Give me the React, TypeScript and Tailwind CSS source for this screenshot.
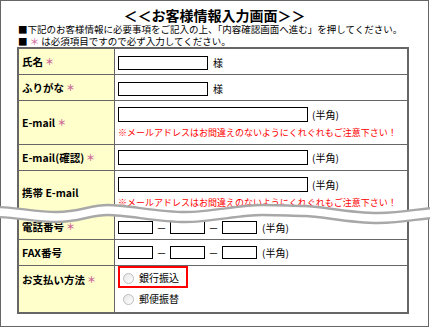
import type { ReactNode } from "react";

const jp = "font-['Noto_Sans_CJK_JP','Liberation_Sans',sans-serif]";

const WAVE =
  "M-5,212 C15,212 35,217 57,217 S90,210 108,210 S160,217 185,217 S240,210 262,210 S290,211 305,211 S350,218 378,218 S420,213 435,213";

function Star() {
  return <span className="ml-[2px] text-[9px] text-[#cc6699]">＊</span>;
}

function Row({
  label,
  required,
  height,
  last,
  alignTop,
  children,
}: {
  label: string;
  required?: boolean;
  height: string;
  last?: boolean;
  alignTop?: boolean;
  children: ReactNode;
}) {
  return (
    <div className={`grid grid-cols-[96px_1fr] ${height} ${last ? "" : "border-b border-[#666]"}`}>
      <div
        className={`flex border-r border-[#666] bg-[#ffffcc] pl-[3px] text-[10.5px] font-bold leading-[12px] text-black ${
          alignTop ? "items-start pt-[8px]" : "items-center"
        }`}
      >
        {label}
        {required && <Star />}
      </div>
      <div className="pl-[3px]">{children}</div>
    </div>
  );
}

function TextBox({ width, height = "h-[14px]" }: { width: string; height?: string }) {
  return <input type="text" className={`${width} ${height} border border-black bg-white`} />;
}

function Note() {
  return (
    <p className="mt-[5px] text-[9px] leading-[12px] text-[#ff0000]">
      ※メールアドレスはお間違えのないようにくれぐれもご注意下さい！
    </p>
  );
}

function Radio({ label }: { label: string }) {
  return (
    <label className="flex items-center gap-[5px]">
      <span className="h-[11px] w-[11px] rounded-full border border-[#bdbdbd] bg-gradient-to-br from-[#e6e6e6] to-white" />
      <span className="text-[10px] leading-[12px]">{label}</span>
    </label>
  );
}

function TelInputs() {
  return (
    <div className="flex h-full items-center text-[10px]">
      <TextBox width="w-[35px]" height="h-[13px]" />
      <span className="w-[17px] text-center">－</span>
      <TextBox width="w-[35px]" height="h-[13px]" />
      <span className="w-[17px] text-center">－</span>
      <TextBox width="w-[35px]" height="h-[13px]" />
      <span className="ml-[5px]">(半角)</span>
    </div>
  );
}

export default function App() {
  return (
    <div className={`relative h-[327px] w-[430px] overflow-hidden bg-white text-black ${jp}`}>
      <div className="h-[327px] w-[429px] border border-[#666] pl-[16px] pt-[6px]">
        <h1 className="pr-[16px] text-center text-[14px] font-bold leading-[16px]">
          ＜＜お客様情報入力画面＞＞
        </h1>
        <p className="pl-px text-[9.5px] leading-[12px]">
          ■下記のお客様情報に必要事項をご記入の上、「内容確認画面へ進む」を押してください。
        </p>
        <p className="pl-px text-[9.5px] leading-[12px]">
          ■ <span className="text-[#cc6699]">＊</span> は必須項目ですので必ず入力してください。
        </p>

        <div className="w-[392px] border-2 border-[#666]">
          <Row label="氏名" required height="h-[26px]">
            <div className="flex h-full items-center pt-[2px] text-[10px]">
              <TextBox width="w-[90px]" />
              <span className="ml-[5px]">様</span>
            </div>
          </Row>
          <Row label="ふりがな" required height="h-[26px]">
            <div className="flex h-full items-center pt-[2px] text-[10px]">
              <TextBox width="w-[90px]" />
              <span className="ml-[5px]">様</span>
            </div>
          </Row>
          <Row label="E-mail" required height="h-[44px]">
            <div className="pt-[6px]">
              <div className="flex items-center text-[10px]">
                <TextBox width="w-[190px]" height="h-[15px]" />
                <span className="ml-[4px]">(半角)</span>
              </div>
              <Note />
            </div>
          </Row>
          <Row label="E-mail(確認)" required height="h-[26px]">
            <div className="flex h-full items-center text-[10px]">
              <TextBox width="w-[190px]" height="h-[15px]" />
              <span className="ml-[4px]">(半角)</span>
            </div>
          </Row>
          <Row label="携帯 E-mail" height="h-[44px]">
            <div className="pt-[6px]">
              <div className="flex items-center text-[10px]">
                <TextBox width="w-[190px]" height="h-[15px]" />
                <span className="ml-[4px]">(半角)</span>
              </div>
              <Note />
            </div>
          </Row>
          <Row label="電話番号" required height="h-[25px]">
            <TelInputs />
          </Row>
          <Row label="FAX番号" height="h-[26px]">
            <TelInputs />
          </Row>
          <Row label="お支払い方法" required height="h-[46px]" last alignTop>
            <div className="w-[70px] border-2 border-[#ff0000] pb-[2px] pl-[3px] pt-[4px]">
              <Radio label="銀行振込" />
            </div>
            <div className="mt-[5px] pl-[5px]">
              <Radio label="郵便振替" />
            </div>
          </Row>
        </div>
      </div>

      <svg
        className="pointer-events-none absolute left-0 top-0"
        width="430"
        height="327"
        viewBox="0 0 430 327"
      >
        <path d={WAVE} fill="none" stroke="#ffffff" strokeWidth="10" />
        <path d={WAVE} transform="translate(0,-5)" fill="none" stroke="#a8a8a8" strokeWidth="2.4" />
        <path d={WAVE} transform="translate(0,5)" fill="none" stroke="#a8a8a8" strokeWidth="2.4" />
      </svg>
    </div>
  );
}
